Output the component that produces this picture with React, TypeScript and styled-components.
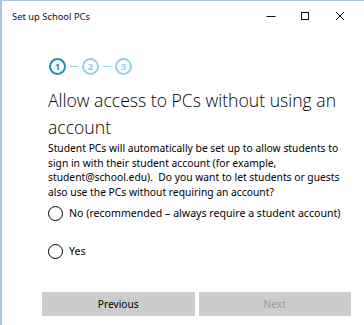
import React from "react";
import styled, { createGlobalStyle } from "styled-components";

const Global = createGlobalStyle`
  html, body { margin: 0; padding: 0; background: #fff; }
  body {
    width: 364px; height: 325px; overflow: hidden;
    font-family: "Noto Sans", "Open Sans", sans-serif; color: #000;
  }
`;

const Window = styled.div`
  box-sizing: border-box;
  width: 364px;
  height: 325px;
  border-top: 1px solid #a9c5e4;
  border-left: 2px solid #a9c5e4;
  display: flex;
  flex-direction: column;
`;

const TitleBar = styled.div`
  height: 30px;
  display: flex;
  align-items: center;
  justify-content: space-between;
  padding-left: 10px;
`;

const TitleText = styled.span`
  font-size: 9.4px;
  color: #111;
`;

const Controls = styled.div`
  display: flex;
  align-self: stretch;
  padding-right: 7px;
`;

const ControlButton = styled.div`
  width: 34.5px;
  display: flex;
  align-items: center;
  justify-content: center;
`;

const Content = styled.div`
  flex: 1;
  display: flex;
  flex-direction: column;
  padding-left: 46px;
  padding-right: 12px;
`;

const Stepper = styled.div`
  display: flex;
  align-items: center;
  margin-top: 27px;
  margin-left: 1px;
`;

const StepCircle = styled.div<{ $active?: boolean }>`
  box-sizing: border-box;
  width: 17px;
  height: 17px;
  border-radius: 50%;
  border: 2px solid ${(p) => (p.$active ? "#1a8fb8" : "#93d3e6")};
  color: ${(p) => (p.$active ? "#1a8fb8" : "#93d3e6")};
  font-size: 9.5px;
  font-weight: 700;
  display: flex;
  align-items: center;
  justify-content: center;
  line-height: 1;
`;

const Connector = styled.div`
  width: 8px;
  height: 1.5px;
  margin: 0 4px;
  background: #93d3e6;
`;

const Heading = styled.h1`
  margin: 12px 0 0;
  font-family: "Open Sans", "Noto Sans", sans-serif;
  font-weight: 300;
  font-size: 17.6px;
  line-height: 27px;
  color: #000;
`;

const Body = styled.p`
  margin: 0;
  font-size: 10.3px;
  line-height: 14.5px;
  color: #000;
`;

const RadioList = styled.div`
  display: flex;
  flex-direction: column;
  gap: 22px;
  margin-top: 6px;
`;

const RadioRow = styled.label`
  display: flex;
  align-items: center;
  gap: 6px;
  height: 16px;
  font-size: 10.6px;
`;

const RadioCircle = styled.span`
  box-sizing: border-box;
  width: 15px;
  height: 15px;
  border-radius: 50%;
  border: 1.6px solid #000;
  flex: none;
`;

const Spacer = styled.div`
  flex: 1;
`;

const ButtonRow = styled.div`
  display: flex;
  gap: 4px;
  padding-left: 40px;
  padding-right: 13px;
  margin-bottom: 9px;
`;

const Button = styled.div<{ $disabled?: boolean }>`
  flex: 1;
  height: 24px;
  background: #cccccc;
  color: ${(p) => (p.$disabled ? "#9a9a9a" : "#000")};
  font-size: 10.2px;
  display: flex;
  align-items: center;
  justify-content: center;
`;

const Icon = ({ kind }: { kind: "min" | "max" | "close" }) => (
  <svg width="10" height="10" viewBox="0 0 10 10" fill="none" stroke="#111" strokeWidth="1">
    {kind === "min" && <line x1="0.5" y1="5.5" x2="9.5" y2="5.5" />}
    {kind === "max" && <rect x="1.5" y="1.5" width="7" height="7" />}
    {kind === "close" && (
      <>
        <line x1="1" y1="1" x2="9" y2="9" />
        <line x1="9" y1="1" x2="1" y2="9" />
      </>
    )}
  </svg>
);

export default function App() {
  return (
    <>
      <Global />
      <Window>
        <TitleBar>
          <TitleText>Set up School PCs</TitleText>
          <Controls>
            <ControlButton><Icon kind="min" /></ControlButton>
            <ControlButton><Icon kind="max" /></ControlButton>
            <ControlButton><Icon kind="close" /></ControlButton>
          </Controls>
        </TitleBar>
        <Content>
          <Stepper>
            <StepCircle $active>1</StepCircle>
            <Connector />
            <StepCircle>2</StepCircle>
            <Connector />
            <StepCircle>3</StepCircle>
          </Stepper>
          <Heading>Allow access to PCs without using an account</Heading>
          <Body>
            Student PCs will automatically be set up to allow students to sign in with their
            student account (for example, student@school.edu).&nbsp; Do you want to let students
            or guests also use the PCs without requiring an account?
          </Body>
          <RadioList>
            <RadioRow>
              <RadioCircle />
              No (recommended – always require a student account)
            </RadioRow>
            <RadioRow>
              <RadioCircle />
              Yes
            </RadioRow>
          </RadioList>
          <Spacer />
        </Content>
        <ButtonRow>
          <Button>Previous</Button>
          <Button $disabled>Next</Button>
        </ButtonRow>
      </Window>
    </>
  );
}
